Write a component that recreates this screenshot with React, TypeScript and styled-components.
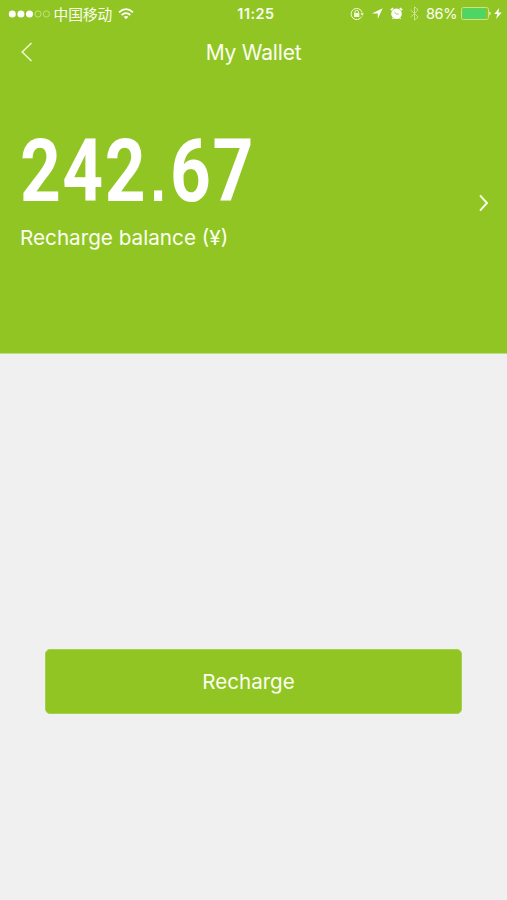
import React from "react";
import styled, { createGlobalStyle } from "styled-components";

const GlobalStyle = createGlobalStyle`
  *, *::before, *::after { box-sizing: border-box; }
  body { margin: 0; background: #f0f0f0; }
`;

const green = "#91c524";

const Screen = styled.main`
  display: flex;
  flex-direction: column;
  width: 507px;
  height: 900px;
  overflow: hidden;
  background: #f0f0f0;
  color: #fbfff0;
  font-family: Inter, "Noto Sans CJK SC", sans-serif;
`;

const WalletPanel = styled.section`
  display: flex;
  flex-direction: column;
  height: 354px;
  background: ${green};
  border-bottom: 1px solid #bedb82;
`;

const StatusBar = styled.header`
  display: grid;
  grid-template-columns: 1fr auto 1fr;
  align-items: center;
  height: 27px;
  padding: 0 5px 0 8px;
`;

const StatusGroup = styled.div<{ $end?: boolean }>`
  display: flex;
  align-items: center;
  justify-content: ${(p) => (p.$end ? "flex-end" : "flex-start")};
`;

const Icon = styled.svg<{ $gap?: number }>`
  display: block;
  flex: none;
  margin-left: ${(p) => p.$gap ?? 0}px;
  overflow: visible;
`;

const Carrier = styled.span`
  margin-left: 3.5px;
  font: 400 14.7px/20px "Noto Sans CJK SC", sans-serif;
  white-space: nowrap;
`;

const Clock = styled.time`
  padding-left: 2px;
  font-size: 14.4px;
  font-weight: 600;
  line-height: 20px;
  letter-spacing: 0.5px;
`;

const Percent = styled.span`
  margin-left: 7px;
  font-size: 14.5px;
  line-height: 20px;
  letter-spacing: -0.4px;
`;

const NavBar = styled.nav`
  display: grid;
  grid-template-columns: 60px 1fr 60px;
  align-items: center;
  height: 50px;
`;

const IconButton = styled.button`
  display: flex;
  padding: 0;
  border: 0;
  background: none;
  color: inherit;
`;

const BackButton = styled(IconButton)`
  padding-left: 21px;
`;

const Title = styled.h1`
  margin: 0;
  padding-top: 2px;
  text-align: center;
  font-size: 21px;
  font-weight: 400;
  line-height: 28px;
  letter-spacing: -0.2px;
`;

const BalanceRow = styled.div`
  display: flex;
  align-items: center;
  justify-content: space-between;
  margin-top: 49px;
  padding: 0 18px 0 20px;
  height: 154px;
`;

const Balance = styled.div`
  height: 154px;
`;

const Amount = styled.div`
  width: 285px;
  height: 90px;
  color: #fff;
  font: 700 88px/90px Roboto, sans-serif;
  transform: scaleX(0.81);
  transform-origin: left;
  white-space: nowrap;
  letter-spacing: 1.8px;
`;

const Point = styled.span`
  padding-left: 4px;
  font-family: "Liberation Sans", sans-serif;
  font-size: 70px;
  line-height: 0;
  letter-spacing: 5px;
`;

const Caption = styled.div`
  margin-top: 8px;
  font-size: 20.7px;
  line-height: 28px;
  letter-spacing: 0;
  white-space: nowrap;
`;

const Actions = styled.section`
  display: flex;
  padding: 295px 45px 0;
`;

const RechargeButton = styled.button`
  width: 418px;
  height: 65px;
  padding: 0 10px 0 0;
  border: 1px solid #a5d04d;
  border-radius: 5px;
  background: ${green};
  color: #fbfff0;
  font: 400 20.6px/28px Inter, sans-serif;
`;

const SignalDots = () => (
  <Icon width="42" height="8" viewBox="0 0 42 8">
    {[4.3, 12.9, 21.5].map((x) => (
      <circle key={x} cx={x} cy="4" r="3.5" fill="#fff" />
    ))}
    {[30, 38.4].map((x) => (
      <circle key={x} cx={x} cy="4" r="3.1" fill="none" stroke="#d5eba5" strokeWidth="0.7" />
    ))}
  </Icon>
);

const Wifi = () => (
  <Icon $gap={5.5} width="16" height="12" viewBox="0 0 16 12" fill="none" stroke="#fff" strokeWidth="1.8">
    <path d="M1 4.3Q8 -2 15 4.3M3.6 7Q8 3.2 12.4 7" />
    <path d="M5.6 8.8Q8 7 10.4 8.8L8 11.3Z" fill="#fff" stroke="none" />
  </Icon>
);

const RotationLock = () => (
  <Icon width="14" height="14" viewBox="0 0 14 14" fill="none" stroke="#f1fad9">
    <path d="M11.7 9.5A5.6 5.6 0 1 1 12.1 5.5" strokeWidth="1" />
    <path d="M10.4 6.2h3.5l-1.7 2.5z" fill="#f1fad9" stroke="none" />
    <path d="M5 6V5a1.7 1.7 0 0 1 3.4 0v1" strokeWidth="1" />
    <rect x="4" y="6" width="5.4" height="4" fill="#f1fad9" stroke="none" />
  </Icon>
);

const Location = () => (
  <Icon $gap={8} width="11" height="11" viewBox="0 0 11 11">
    <path d="M0 5.5L10.7 0.2L5.8 10.8V5.6Z" fill="#fff" />
  </Icon>
);

const Alarm = () => (
  <Icon $gap={7} width="13" height="13" viewBox="0 0 13 13" fill="none" stroke="#fff">
    <circle cx="6.5" cy="6.8" r="5.3" fill="#fff" stroke="none" />
    <path d="M.8 3.2L3.2 1.2M9.8 1.2l2.4 2" strokeWidth="1.7" />
    <path d="M3.3 11l-.8 1M9.7 11l.8 1" strokeWidth="1.2" />
    <path d="M4.3 5L6.5 7H8.7" stroke={green} strokeWidth="0.8" />
  </Icon>
);

const Bluetooth = () => (
  <Icon $gap={7} width="9" height="15" viewBox="0 0 9 15" fill="none" stroke="#c9e58d">
    <path d="M.5 3.8L8.2 11L4.5 14.2V.8L8.2 4L.5 11.2" />
  </Icon>
);

const Battery = () => (
  <Icon $gap={4} width="32" height="13" viewBox="0 0 32 13">
    <rect x=".5" y=".5" width="27" height="12" rx="2" fill="none" stroke="#c7e48f" />
    <rect x="1.5" y="1.5" width="23" height="10" rx=".8" fill="#4bd666" />
    <path d="M28.5 4.3Q30.8 6.5 28.5 8.7Z" fill="#fff" />
  </Icon>
);

const Bolt = () => (
  <Icon $gap={1} width="8" height="11" viewBox="0 0 8 11">
    <path d="M5.2 0L.2 6H3.4L2 11L7.7 4.5H4.4Z" fill="#fff" />
  </Icon>
);

export default function App() {
  return (
    <>
      <GlobalStyle />
      <Screen>
        <WalletPanel>
          <StatusBar>
            <StatusGroup>
              <SignalDots />
              <Carrier>中国移动</Carrier>
              <Wifi />
            </StatusGroup>
            <Clock>11:25</Clock>
            <StatusGroup $end>
              <RotationLock />
              <Location />
              <Alarm />
              <Bluetooth />
              <Percent>86%</Percent>
              <Battery />
              <Bolt />
            </StatusGroup>
          </StatusBar>
          <NavBar>
            <BackButton aria-label="Back">
              <Icon width="12" height="20" viewBox="0 0 12 20" fill="none" stroke="#e9f6cb" strokeWidth="1.6">
                <path d="M10.5 1L1.2 10L10.5 19" />
              </Icon>
            </BackButton>
            <Title>My Wallet</Title>
          </NavBar>
          <BalanceRow>
            <Balance>
              <Amount>
                242<Point>.</Point>67
              </Amount>
              <Caption>Recharge balance (¥)</Caption>
            </Balance>
            <IconButton aria-label="Balance details">
              <Icon width="10" height="18" viewBox="0 0 10 18" fill="none" stroke="#f5fce5" strokeWidth="2">
                <path d="M1 1.3L8 9L1 16.7" />
              </Icon>
            </IconButton>
          </BalanceRow>
        </WalletPanel>
        <Actions>
          <RechargeButton>Recharge</RechargeButton>
        </Actions>
      </Screen>
    </>
  );
}
